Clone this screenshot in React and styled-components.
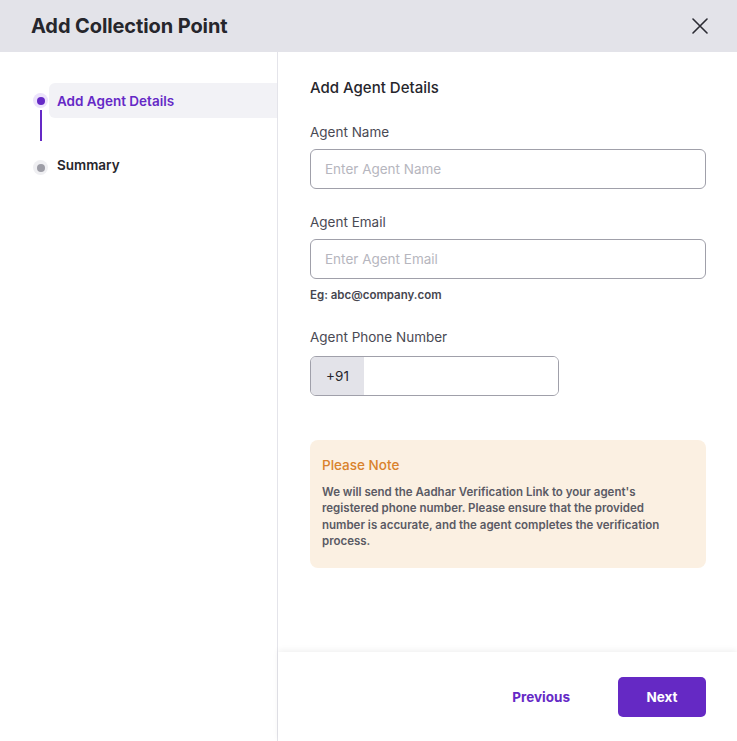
import React, { useState } from "react";
import styled, { createGlobalStyle } from "styled-components";

const GlobalStyle = createGlobalStyle`
  * { box-sizing: border-box; }
  html, body { margin: 0; padding: 0; background: #ffffff; }
  body { font-family: "Inter", "Noto Sans", sans-serif; color: #24242b; }
`;

const steps = [
  { title: "Add Agent Details", active: true },
  { title: "Summary", active: false },
];

const App = () => {
  const [name, setName] = useState("");
  const [email, setEmail] = useState("");
  const [phone, setPhone] = useState("");

  return (
    <>
      <GlobalStyle />
      <Modal>
        <Header>
          <Title>Add Collection Point</Title>
          <CloseButton aria-label="Close">
            <svg width="16" height="16" viewBox="0 0 16 16" fill="none">
              <path d="M1 1L15 15M15 1L1 15" stroke="#2b2b33" strokeWidth="1.6" strokeLinecap="round" />
            </svg>
          </CloseButton>
        </Header>
        <Body>
          <Sidebar>
            {steps.map((step, index) => (
              <Step key={step.title}>
                <Marker>
                  <Dot active={step.active} />
                  {index < steps.length - 1 && <Connector />}
                </Marker>
                <StepLabel active={step.active}>{step.title}</StepLabel>
              </Step>
            ))}
          </Sidebar>
          <Main>
            <Content>
              <SectionTitle>Add Agent Details</SectionTitle>
              <Field>
                <Label>Agent Name</Label>
                <Input
                  placeholder="Enter Agent Name"
                  value={name}
                  onChange={(e) => setName(e.target.value)}
                />
              </Field>
              <Field>
                <Label>Agent Email</Label>
                <Input
                  placeholder="Enter Agent Email"
                  value={email}
                  onChange={(e) => setEmail(e.target.value)}
                />
                <Hint>Eg: abc@company.com</Hint>
              </Field>
              <Field>
                <Label>Agent Phone Number</Label>
                <PhoneBox>
                  <Prefix>+91</Prefix>
                  <PhoneInput value={phone} onChange={(e) => setPhone(e.target.value)} />
                </PhoneBox>
              </Field>
              <Note>
                <NoteTitle>Please Note</NoteTitle>
                <NoteText>
                  We will send the Aadhar Verification Link to your agent's
                  registered phone number. Please ensure that the provided
                  number is accurate, and the agent completes the verification
                  process.
                </NoteText>
              </Note>
            </Content>
            <Footer>
              <GhostButton>Previous</GhostButton>
              <PrimaryButton>Next</PrimaryButton>
            </Footer>
          </Main>
        </Body>
      </Modal>
    </>
  );
};

const Modal = styled.div`
  width: 737px;
  height: 741px;
  display: flex;
  flex-direction: column;
  background: #ffffff;
  overflow: hidden;
`;

const Header = styled.div`
  height: 52px;
  flex-shrink: 0;
  display: flex;
  align-items: center;
  justify-content: space-between;
  padding: 0 29px 0 31px;
  background: #e3e3e9;
`;

const Title = styled.h1`
  margin: 0;
  font-size: 20px;
  font-weight: 700;
  color: #26262c;
  letter-spacing: -0.1px;
`;

const CloseButton = styled.button`
  border: none;
  background: transparent;
  padding: 0;
  display: flex;
  cursor: pointer;
`;

const Body = styled.div`
  flex: 1;
  display: flex;
  min-height: 0;
`;

const Sidebar = styled.div`
  width: 278px;
  flex-shrink: 0;
  border-right: 1px solid #e4e4ea;
  padding-top: 31px;
  padding-left: 32px;
  display: flex;
  flex-direction: column;
`;

const Step = styled.div`
  display: flex;
  align-items: flex-start;
`;

const Marker = styled.div`
  width: 17px;
  display: flex;
  flex-direction: column;
  align-items: center;
  padding-top: 10px;
`;

const Dot = styled.span`
  width: 15px;
  height: 15px;
  border-radius: 50%;
  background: ${({ active }) => (active ? "#ece3fb" : "#efeff2")};
  display: flex;
  align-items: center;
  justify-content: center;

  &::after {
    content: "";
    width: 8px;
    height: 8px;
    border-radius: 50%;
    background: ${({ active }) => (active ? "#6529c6" : "#9d9da6")};
  }
`;

const Connector = styled.span`
  width: 2px;
  height: 31px;
  margin-top: 2px;
  background: #6529c6;
  margin-bottom: 9px;
`;

const StepLabel = styled.div`
  flex: 1;
  height: 35px;
  display: flex;
  align-items: center;
  padding-left: 8px;
  border-radius: 6px 0 0 6px;
  font-size: 13.5px;
  font-weight: 600;
  color: ${({ active }) => (active ? "#6529c6" : "#26262c")};
  background: ${({ active }) => (active ? "#f2f2f6" : "transparent")};
  margin-top: ${({ active }) => (active ? "0" : "-3px")};
`;

const Main = styled.div`
  flex: 1;
  display: flex;
  flex-direction: column;
  min-width: 0;
`;

const Content = styled.div`
  flex: 1;
  padding: 26px 31px 0 32px;
  display: flex;
  flex-direction: column;
`;

const SectionTitle = styled.h2`
  margin: 0 0 27px;
  font-size: 15px;
  font-weight: 500;
  color: #26262c;
`;

const Field = styled.div`
  display: flex;
  flex-direction: column;
  margin-bottom: 25px;
`;

const Label = styled.label`
  font-size: 13.5px;
  font-weight: 400;
  color: #4a4a54;
  margin-bottom: 9px;
`;

const Input = styled.input`
  height: 40px;
  width: 100%;
  border: 1px solid #a0a0aa;
  border-radius: 6px;
  padding: 0 14px;
  font-family: inherit;
  font-size: 13.5px;
  color: #26262c;
  outline: none;

  &::placeholder {
    color: #b6b6be;
  }
`;

const Hint = styled.div`
  margin-top: 9px;
  font-size: 11.5px;
  font-weight: 600;
  color: #46464f;
  margin-bottom: 2px;
`;

const PhoneBox = styled.div`
  width: 249px;
  height: 40px;
  margin-top: 2px;
  display: flex;
  border: 1px solid #a0a0aa;
  border-radius: 6px;
  overflow: hidden;
`;

const Prefix = styled.div`
  width: 53px;
  flex-shrink: 0;
  display: flex;
  align-items: center;
  justify-content: center;
  background: #e3e3e9;
  font-size: 13.5px;
  color: #26262c;
`;

const PhoneInput = styled.input`
  flex: 1;
  min-width: 0;
  width: 0;
  border: none;
  outline: none;
  padding: 0 12px;
  font-family: inherit;
  font-size: 13.5px;
`;

const Note = styled.div`
  margin-top: 19px;
  background: #fbf0e2;
  border-radius: 8px;
  padding: 17px 24px 18px 12px;
`;

const NoteTitle = styled.div`
  font-size: 13.5px;
  font-weight: 500;
  line-height: 16px;
  color: #d9822c;
  margin-bottom: 11px;
`;

const NoteText = styled.p`
  margin: 0;
  font-size: 11.5px;
  font-weight: 600;
  line-height: 16.4px;
  color: #5a5a64;
`;

const Footer = styled.div`
  height: 89px;
  flex-shrink: 0;
  display: flex;
  align-items: center;
  justify-content: flex-end;
  gap: 36px;
  padding: 0 31px 0 0;
  box-shadow: 0 -2px 6px rgba(0, 0, 0, 0.06);
`;

const GhostButton = styled.button`
  border: none;
  background: transparent;
  font-family: inherit;
  font-size: 13.5px;
  font-weight: 700;
  color: #6529c6;
  padding: 0 12px;
  height: 40px;
  cursor: pointer;
`;

const PrimaryButton = styled.button`
  width: 88px;
  height: 40px;
  border: none;
  border-radius: 5px;
  background: #6529c4;
  color: #ffffff;
  font-family: inherit;
  font-size: 13.5px;
  font-weight: 700;
  cursor: pointer;
`;

export default App;
